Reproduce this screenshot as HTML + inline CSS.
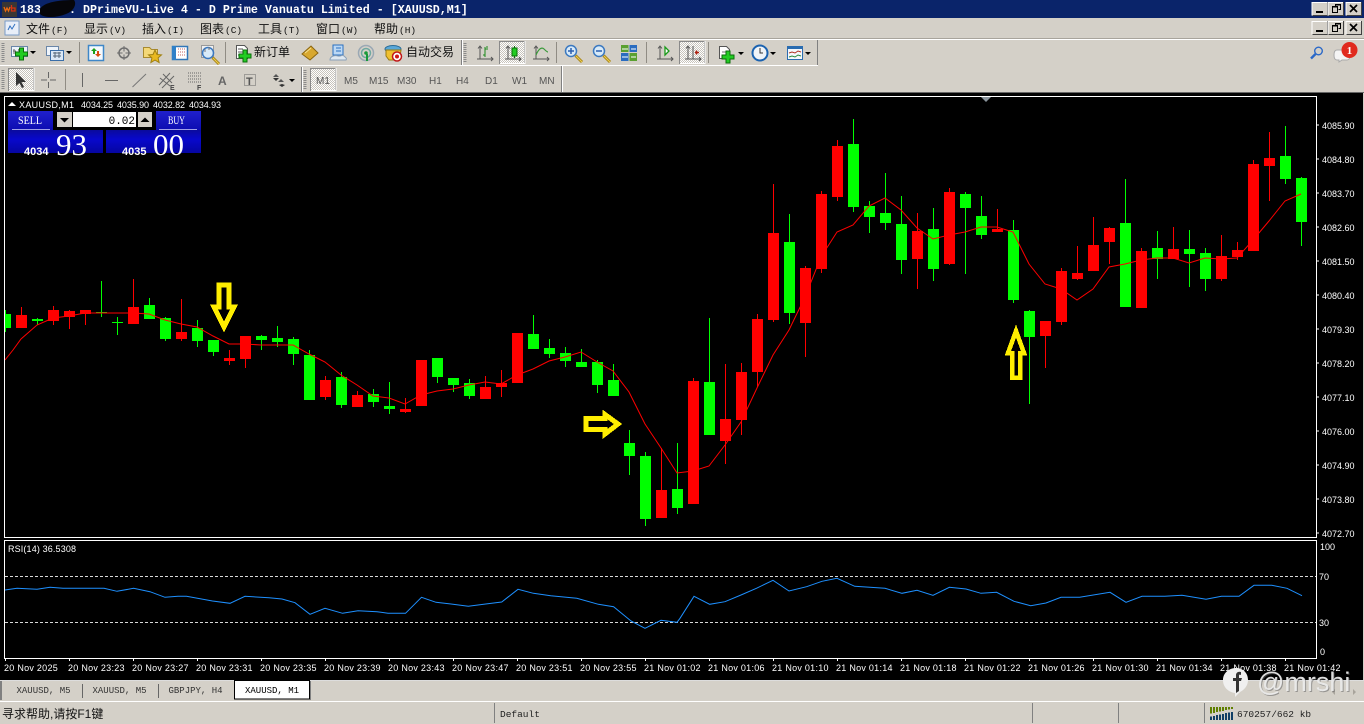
<!DOCTYPE html>
<html>
<head>
<meta charset="utf-8">
<title>DPrimeVU-Live 4</title>
<style>
html,body{margin:0;padding:0;background:#d4d0c8;width:1364px;height:724px;overflow:hidden}
svg{display:block;position:absolute;left:0;top:0}
text{white-space:pre}
.s{font-family:"Liberation Sans",sans-serif;font-size:9px;fill:#fff}
.t{font-family:"Liberation Sans",sans-serif;font-size:9px;fill:#fff;letter-spacing:.27px}
.m{font-family:"Liberation Mono",monospace;font-size:9px;fill:#333}
.c{font-family:"Liberation Sans","WenQuanYi Zen Hei","Noto Sans CJK SC",sans-serif;font-size:12px;fill:#111}
.p{font-family:"Liberation Mono",monospace;font-size:9.5px;fill:#222}
.f{font-family:"Liberation Sans",sans-serif;font-size:10px;fill:#555}
.ser{font-family:"Liberation Serif",serif;fill:#fff}
</style>
</head>
<body>
<svg width="1364" height="724" viewBox="0 0 1364 724" xmlns="http://www.w3.org/2000/svg">
<defs>
<pattern id="chk" width="2" height="2" patternUnits="userSpaceOnUse"><rect width="2" height="2" fill="#fff"/><rect width="1" height="1" fill="#c8c4bc"/><rect x="1" y="1" width="1" height="1" fill="#c8c4bc"/></pattern>
<linearGradient id="bt" x1="0" y1="0" x2="0" y2="1"><stop offset="0" stop-color="#2020cc"/><stop offset="1" stop-color="#0c0cb0"/></linearGradient>
<linearGradient id="bl" x1="0" y1="0" x2="0" y2="1"><stop offset="0" stop-color="#0a0a9c"/><stop offset=".4" stop-color="#0808cc"/><stop offset="1" stop-color="#0606a0"/></linearGradient>
<g id="bw"><rect width="16" height="14" fill="#d4d0c8"/><path d="M0 13.5V.5H15.5" fill="none" stroke="#fff"/><path d="M.5 13.5H15.5V0" fill="none" stroke="#404040"/></g>
<g id="winbtns">
<use href="#bw" x="1312" y="0"/><rect x="1316" y="9" width="7" height="2" fill="#000"/>
<use href="#bw" x="1328" y="0"/><path d="M1335.5 4.500V2.500H1340.500V7.500H1338.500M1332.500 4.500H1337.500V10.500H1332.500Z" fill="none" stroke="#000"/><path d="M1332 5H1338M1335 3H1341" stroke="#000"/>
<use href="#bw" x="1346" y="0"/><path d="M1350 3L1357 10M1357 3L1350 10" stroke="#000" stroke-width="1.700"/>
</g>
<path id="plus" d="M-2-6h4v4h4v4h-4v4h-4v-4h-4v-4h4z" fill="#22cc22" stroke="#0a6e0a"/>
<path id="drop" d="M0 0h6l-3 3z" fill="#000"/>
<g id="grip"><path d="M3 0V20" stroke="#8a8a8a" stroke-width="3" stroke-dasharray="1 1"/></g>
<g id="axes"><path d="M3 0V13M0 13H16M1 2.500L3 0L5 2.500M14 11L16 13L14 15M0 11" fill="none" stroke="#555"/></g>
<g id="mag"><circle cx="0" cy="0" r="5.500" fill="#d8eaf8" stroke="#3a78c0" stroke-width="1.500"/><path d="M4.500 4.500L11 11" stroke="#a88418" stroke-width="3"/><path d="M5 5L11 11" stroke="#f0d050"/></g>
</defs>

<!-- app chrome -->
<rect width="1364" height="724" fill="#d4d0c8"/>
<rect width="1364" height="18" fill="#0a246a"/>
<rect x="2" y="2" width="15" height="15" fill="#3a3634"/>
<path d="M4 7l1.500 4 1.500-3 1.500 3 1.500-4" fill="none" stroke="#f06a10" stroke-width="1.300"/><path d="M11.500 5v6h3.500v-3h-3.500" fill="none" stroke="#d83010" stroke-width="1.300"/>
<text x="20" y="13" font-family="Liberation Mono,monospace" font-size="11.670" font-weight="bold" fill="#fff">183</text>
<path d="M40 9C44 2 60 0 74 0C77 4 74 11 66 14C56 18 44 18 40 14Z" fill="#06060a"/>
<text x="69" y="13" font-family="Liberation Mono,monospace" font-size="11.670" font-weight="bold" fill="#fff">. DPrimeVU-Live 4 - D Prime Vanuatu Limited - [XAUUSD,M1]</text>
<use href="#winbtns" y="2"/>
<use href="#winbtns" y="21"/>

<!-- menu -->
<g>
<rect x="5" y="21" width="14" height="14" fill="#e8eef8" stroke="#7a9cc8"/><path d="M8 30l2-4 2 3 3-5" fill="none" stroke="#2f6fc0"/>
<text class="c" x="26" y="33">文件<tspan font-family="Liberation Mono,monospace" font-size="9.500" dx="1">(F)</tspan></text>
<text class="c" x="84" y="33">显示<tspan font-family="Liberation Mono,monospace" font-size="9.500" dx="1">(V)</tspan></text>
<text class="c" x="142" y="33">插入<tspan font-family="Liberation Mono,monospace" font-size="9.500" dx="1">(I)</tspan></text>
<text class="c" x="200" y="33">图表<tspan font-family="Liberation Mono,monospace" font-size="9.500" dx="1">(C)</tspan></text>
<text class="c" x="258" y="33">工具<tspan font-family="Liberation Mono,monospace" font-size="9.500" dx="1">(T)</tspan></text>
<text class="c" x="316" y="33">窗口<tspan font-family="Liberation Mono,monospace" font-size="9.500" dx="1">(W)</tspan></text>
<text class="c" x="374" y="33">帮助<tspan font-family="Liberation Mono,monospace" font-size="9.500" dx="1">(H)</tspan></text>
</g>

<!-- toolbar separators -->
<rect y="38" width="1364" height="1" fill="#a8a49c"/>
<rect y="39" width="1364" height="1" fill="#fff"/>
<rect y="65" width="818" height="1" fill="#fff"/>
<rect x="817" y="40" width="1" height="25" fill="#808080"/>
<rect y="92" width="1364" height="1" fill="#666"/>
<rect x="461" y="40" width="1" height="25" fill="#808080"/><rect x="462" y="40" width="1" height="25" fill="#fff"/>
<rect x="301" y="67" width="1" height="25" fill="#808080"/><rect x="302" y="67" width="1" height="25" fill="#fff"/>
<rect x="561" y="66" width="1" height="26" fill="#808080"/><rect x="562" y="66" width="1" height="26" fill="#fff"/>
<use href="#grip" x="0" y="43"/><use href="#grip" x="0" y="70"/><use href="#grip" x="462" y="43"/><use href="#grip" x="302" y="70"/>
<g fill="#908c84">
<rect x="79" y="42" width="1" height="21"/><rect x="225" y="42" width="1" height="21"/><rect x="556" y="42" width="1" height="21"/><rect x="646" y="42" width="1" height="21"/><rect x="708" y="42" width="1" height="21"/><rect x="65" y="69" width="1" height="21"/>
</g>

<!-- toolbar 1 icons -->
<rect x="11.500" y="46.500" width="16" height="10" fill="#eef4fb" stroke="#6a86a8"/><path d="M14 49v5M13 51h3M19 49v3M18 50h3" stroke="#666" fill="none"/><use href="#plus" x="21.500" y="54"/><use href="#drop" x="30" y="51"/>
<rect x="46.500" y="46.500" width="12" height="9" fill="#eef4fb" stroke="#6a86a8"/><rect x="50.500" y="50.500" width="13" height="10" fill="#dbe8f6" stroke="#3a6ea8"/><path d="M53 53h8M53 56h8M55 52v6M59 52v6" stroke="#567" fill="none"/><use href="#drop" x="66" y="51"/>
<rect x="88.500" y="45.500" width="15" height="15" fill="#f4f8fc" stroke="#3f87c8" stroke-width="1.500"/><path d="M94 48l-3 3h2v3h2v-3h2z" fill="#1aa01a"/><path d="M98 57l3-3h-2v-3h-2v3h-2z" fill="#d84a10"/>
<circle cx="124" cy="53" r="5" fill="none" stroke="#6e6e6e" stroke-width="1.500"/><path d="M124 46v14M117 53h14" stroke="#6e6e6e"/><circle cx="124" cy="53" r="1.500" fill="#d4d0c8"/>
<path d="M143.500 47.500h6l2 2h6v8h-14z" fill="#f4d878" stroke="#a88a30"/><path d="M155 50l2 4.500 4.500.4-3.400 3 1 4.600-4.100-2.400-4.100 2.400 1-4.600-3.400-3 4.500-.4z" fill="#e8b820" stroke="#a08010"/>
<rect x="172.500" y="46.500" width="15" height="13" fill="#fff" stroke="#3176b8" stroke-width="1.500"/><rect x="172" y="46" width="4" height="14" fill="#2f80c8"/><path d="M178 49h8M178 52h8M178 55h8" stroke="#c06060" stroke-dasharray="1 1"/>
<rect x="201.500" y="45.500" width="12" height="12" fill="#f0f0f0" stroke="#999"/><use href="#mag" x="208" y="53" /><path d="M205 49v3M209 47v3" stroke="#777"/>
<path d="M236.500 45.500h8l3 3v10h-11z" fill="#fff" stroke="#555"/><path d="M238 49h5M238 52h7M238 55h5" stroke="#555"/><use href="#plus" x="245" y="56"/>
<text class="c" x="254" y="56">新订单</text>
<path d="M302 54l9-8 7 7-8 7z" fill="#d8a830" stroke="#8a6510"/><path d="M305 53l6-5" stroke="#f6e090"/>
<path d="M333 45h10v10h-10z" fill="#bcd8f4" stroke="#2a70c0"/><path d="M336 48h5M336 51h5" stroke="#2a70c0"/><path d="M330 60c0-4 5-5 8-4s4-2 6 0 3 2 2 4z" fill="#dfe8f0" stroke="#8aa0b8"/>
<circle cx="366" cy="53" r="7.500" fill="none" stroke="#9aa8b4" stroke-width="1.500"/><circle cx="366" cy="53" r="4.500" fill="none" stroke="#6fa8a0" stroke-width="1.500"/><circle cx="366" cy="53" r="1.800" fill="#1a9a3a"/><path d="M367 54v7" stroke="#1a9a3a" stroke-width="2"/>
<ellipse cx="393" cy="49" rx="8" ry="3.500" fill="#5aa8d8" stroke="#2a6c98"/><path d="M386 50h15l-1 7-4 3h-7l-3-4z" fill="#f0c030" stroke="#9a7a10"/><circle cx="397" cy="56.500" r="4.500" fill="#fff" stroke="#c01818" stroke-width="1.500"/><circle cx="397" cy="56.500" r="2" fill="#d01818"/>
<text class="c" x="406" y="56">自动交易</text>

<!-- chart type -->
<g transform="translate(477,46)"><use href="#axes"/><path d="M8 1v10M8 3h3M11 3" stroke="#1a8a1a" fill="none"/><path d="M9 1H11M8 9H6" stroke="#1a8a1a"/></g>
<rect x="499.500" y="41.500" width="25" height="22" fill="url(#chk)" stroke="#8a8a8a"/><path d="M500 63.500H525V41" fill="none" stroke="#fff"/>
<g transform="translate(505,46)"><use href="#axes"/><rect x="7" y="2" width="5" height="8" fill="#22cc22" stroke="#0a6e0a"/><path d="M9.500 0v2M9.500 10v2" stroke="#0a6e0a"/></g>
<g transform="translate(533,46)"><use href="#axes"/><path d="M3 9C6 2 9 1 11 3S14 6 15 6" fill="none" stroke="#3a9a3a" stroke-width="1.200"/></g>
<use href="#mag" x="571" y="51"/><path d="M568 51h6M571 48v6" stroke="#2a60b0" stroke-width="1.500"/>
<use href="#mag" x="599" y="51"/><path d="M596 51h6" stroke="#2a60b0" stroke-width="1.500"/>
<g><rect x="621" y="45" width="7.500" height="7" fill="#5aa030"/><rect x="629.500" y="45" width="7.500" height="7" fill="#2a6cc0"/><rect x="621" y="53" width="7.500" height="8" fill="#2a6cc0"/><rect x="629.500" y="53" width="7.500" height="8" fill="#5aa030"/><path d="M622 49h6M631 49h5M622 57h6M631 57h5" stroke="#fff"/></g>
<g transform="translate(657,46)"><use href="#axes"/><path d="M8 1l4 4-4 4z" fill="#fff" stroke="#1a9a1a" stroke-width="1.300"/></g>
<rect x="679.500" y="41.500" width="25" height="22" fill="url(#chk)" stroke="#8a8a8a"/><path d="M680 63.500H705V41" fill="none" stroke="#fff"/>
<g transform="translate(685,46)"><use href="#axes"/><path d="M8 0V13" stroke="#555"/><path d="M14 6.500h-4M11.500 4.500v4" stroke="#b02010" stroke-width="1.500"/></g>
<path d="M719.500 46.500h7l3 3v9h-10z" fill="#fff" stroke="#555"/><path d="M722 52h4M722 55h4" stroke="#777"/><use href="#plus" x="728" y="57"/><use href="#drop" x="738" y="52"/>
<circle cx="760" cy="53" r="7.500" fill="#f0f4f8" stroke="#1a62b0" stroke-width="2"/><path d="M760 48v5h3" stroke="#333" fill="none"/><use href="#drop" x="770" y="52"/>
<rect x="787.500" y="46.500" width="15" height="13" fill="#f4f8fc" stroke="#2a6cb0"/><rect x="787" y="46" width="16" height="3" fill="#2a6cb0"/><path d="M789 53l3-1 3 1 3-2 3 1" fill="none" stroke="#b03020"/><path d="M789 57l3-1 3 1 3-2 3 1" fill="none" stroke="#2a8a3a"/><use href="#drop" x="805" y="52"/>
<!-- search + chat -->
<circle cx="1318.500" cy="51" r="3.800" fill="none" stroke="#2a68c8" stroke-width="1.400"/><path d="M1315.500 54L1311 58.500" stroke="#2a68c8" stroke-width="2.400"/>
<path d="M1337 50h10c2 0 3 2 3 5s-1 5-3 5h-5l-3 2v-2h-2c-2 0-3-2-3-5s1-5 3-5z" fill="#f4f4f4" stroke="#aaa"/>
<circle cx="1349.500" cy="50" r="8" fill="#e02a1e"/><text x="1349.500" y="54" text-anchor="middle" font-family="Liberation Serif,serif" font-size="11" font-weight="bold" fill="#fff">1</text>

<!-- toolbar 2 -->
<rect x="8.500" y="68.500" width="25" height="22" fill="url(#chk)" stroke="#8a8a8a"/><path d="M9 90.500H34V68" fill="none" stroke="#fff"/>
<path d="M16 72v14l3.500-3 2.500 5 2-1-2.500-5h4.500z" fill="#333"/>
<path d="M48.500 72v6M48.500 82v6M41 80h6M50 80h6" stroke="#666" fill="none"/>
<rect x="82" y="73" width="1" height="14" fill="#666"/><rect x="105" y="80" width="13" height="1" fill="#666"/><path d="M132.500 87L146 74" stroke="#777"/>
<path d="M159 85L170 73M162 88L174 76M160 78l10 8M163 74l9 9" stroke="#666" fill="none"/><text x="170" y="90" font-family="Liberation Sans,sans-serif" font-size="7" font-weight="bold" fill="#444">E</text>
<path d="M188 73h14M188 76h14M188 79h14M188 82h14" stroke="#666" stroke-dasharray="1 1"/><text x="197" y="90" font-family="Liberation Sans,sans-serif" font-size="7" font-weight="bold" fill="#444">F</text>
<text x="218" y="85" font-family="Liberation Sans,sans-serif" font-size="12" font-weight="bold" fill="#666">A</text>
<rect x="244.500" y="74.500" width="11" height="11" fill="none" stroke="#666" stroke-dasharray="1 1"/><text x="246" y="85" font-family="Liberation Sans,sans-serif" font-size="11" font-weight="bold" fill="#555">T</text>
<path d="M276 74l-3 3h6zM281 79l-3 3h6z" fill="#555"/><path d="M273 78l3 3 3-3zM282 84l-3 1 3 2 3-2z" fill="#333"/><use href="#drop" x="289" y="79"/>
<rect x="310.500" y="68.500" width="25" height="22" fill="url(#chk)" stroke="#8a8a8a"/><path d="M311 90.500H336V68" fill="none" stroke="#fff"/>
<text class="f" x="316" y="84">M1</text><text class="f" x="344" y="84">M5</text><text class="f" x="369" y="84">M15</text><text class="f" x="397" y="84">M30</text><text class="f" x="429" y="84">H1</text><text class="f" x="456" y="84">H4</text><text class="f" x="485" y="84">D1</text><text class="f" x="512" y="84">W1</text><text class="f" x="539" y="84">MN</text>

<!-- chart bg -->
<rect x="0" y="93" width="1363" height="587" fill="#000"/>
<path d="M4.500 96.500H1316.500V537.500H4.500ZM4.500 540.500H1316.500V658.500H4.500Z" fill="none" stroke="#fff"/>
<path d="M981 97h10l-5 5z" fill="#8a949c"/>
<rect y="680" width="1364" height="1" fill="#ddd"/>

<svg x="5" y="97" width="1311" height="440" viewBox="5 97 1311 440">
<g transform="translate(.5,0)" fill="none" shape-rendering="crispEdges">
<path stroke="#00ff00" d="M5 310V332M37 318V325M101 281V317M117 317V335M149 298V319M165 317V341M197 320V347M213 340V356M261 335V350M277 326V347M293 337V365M309 350V400M341 372V408M373 389V407M389 382V414M437 358V383M453 378V392M469 379V399M533 315V349M549 339V358M565 347V367M581 349V367M597 360V393M613 364V396M629 430V475M645 452V526M677 443V514M709 318V435M789 214V324M853 119V212M869 201V233M885 173V230M901 196V274M933 208V281M965 192V274M981 196V239M1013 220V303M1029 310V404M1125 179V307M1157 231V279M1189 230V287M1205 248V291M1285 126V184M1301 177V246"/>
<path stroke="#ff0000" d="M21 307V328M53 306V325M69 310V329M85 310V325M133 279V324M181 299V341M229 350V365M245 336V368M325 376V400M357 391V407M405 398V413M485 376V399M501 370V397M661 448V518M693 378V504M725 364V464M741 363V435M757 314V387M773 184V322M805 266V357M821 191V273M837 140V201M917 213V289M949 188V265M997 209V232M1045 321V368M1061 268V325M1077 246V280M1093 217V271M1109 227V264M1141 248V308M1173 227V259M1221 235V281M1237 242V260M1253 160V251M1269 132V201"/>
<path stroke="#00ff00" stroke-width="11" d="M5 314V328M37 319V321M101 312V313M117 322V323M149 305V319M165 318V339M197 328V341M213 340V352M261 336V340M277 338V342M293 339V354M309 355V400M341 377V405M373 394V402M389 406V409M437 358V377M453 378V385M469 383V396M533 334V349M549 348V354M565 353V361M581 362V367M597 362V385M613 380V396M629 443V456M645 456V519M677 489V508M709 382V435M789 242V313M853 144V207M869 206V217M885 213V223M901 224V260M933 229V269M965 194V208M981 216V235M1013 230V300M1029 311V337M1125 223V307M1157 248V259M1189 249V254M1205 253V279M1285 156V179M1301 178V222"/>
<path stroke="#ff0000" stroke-width="11" d="M21 315V328M53 310V321M69 311V317M85 310V314M133 307V324M181 332V339M229 358V361M245 336V359M325 380V397M357 395V407M405 409V412M421 360V406M485 387V399M501 383V387M517 333V383M661 490V518M693 381V504M725 419V441M741 372V420M757 319V372M773 233V320M805 268V323M821 194V269M837 146V197M917 231V259M949 192V264M997 229V232M1045 321V336M1061 271V322M1077 273V279M1093 245V271M1109 228V242M1141 251V308M1173 249V259M1221 256V279M1237 250V257M1253 164V251M1269 158V166"/>
</g>
<polyline fill="none" stroke="#ff0000" points="5,360 13,350 21,339 37,325 53,318 69,316 85,313 101,313 117,313 133,313 149,314 165,320 181,324 197,327 213,336 229,344 245,344 261,345 277,345 293,345 309,354 325,362 330,366 341,375 357,385 373,396 389,398 405,404 421,395 437,391 453,389 469,385 485,382 501,384 517,375 533,369 549,361 565,357 581,352 597,362 613,371 629,392 645,424 661,448 677,473 693,471 709,466 725,445 741,422 757,388 773,355 789,330 805,297 821,257 837,232 853,225 869,206 885,198 901,210 917,228 933,239 949,235 965,232 981,227 997,227 1013,232 1029,264 1045,284 1061,289 1077,300 1093,289 1109,267 1125,264 1141,260 1157,258 1173,258 1189,263 1205,258 1221,259 1237,258 1253,240 1269,221 1285,201 1301,194"/>
<g fill="none" stroke="#ffee00" stroke-width="5" shape-rendering="crispEdges">
<polygon points="219.200,285 229.200,285 229.200,307 234,307 224,327 214,307 219.200,307"/>
<polygon points="585.800,418.500 605,418.500 605,414.500 618,424 605,434 605,429.300 585.800,429.300"/>
<polygon stroke-width="4.500" points="1012,377.500 1020,377.500 1020,353 1024,353 1016,331 1008,353 1012,353"/>
</g>
</svg>

<!-- chart header -->
<path d="M8 106l4-4 4 4z" fill="#fff"/>
<text class="s" x="19" y="108" textLength="55">XAUUSD,M1</text>
<text class="s" x="81" y="108" textLength="32">4034.25</text><text class="s" x="117" y="108" textLength="32">4035.90</text><text class="s" x="153" y="108" textLength="32">4032.82</text><text class="s" x="189" y="108" textLength="32">4034.93</text>

<!-- one-click panel -->
<rect x="8" y="111" width="45" height="20" fill="url(#bt)"/>
<rect x="156" y="111" width="45" height="20" fill="url(#bt)"/>
<rect x="8" y="130" width="95" height="23" fill="url(#bl)"/>
<rect x="106" y="130" width="95" height="23" fill="url(#bl)"/>
<rect x="12" y="129" width="38" height="1" fill="#a0a0e8"/>
<rect x="159" y="129" width="38" height="1" fill="#a0a0e8"/>
<rect x="57" y="112" width="15" height="15" fill="#d4d0c8"/><path d="M60 118h9l-4.500 4.500z" fill="#000"/>
<rect x="73" y="112" width="63" height="15" fill="#fff"/>
<text x="135" y="124" text-anchor="end" font-family="Liberation Mono,monospace" font-size="11" fill="#000">0.02</text>
<rect x="138" y="112" width="14" height="15" fill="#d4d0c8"/><path d="M140.500 122h9l-4.500-4.500z" fill="#000"/>
<text class="ser" x="18" y="124" font-size="12" textLength="24" lengthAdjust="spacingAndGlyphs">SELL</text>
<text class="ser" x="168" y="124" font-size="12" textLength="17" lengthAdjust="spacingAndGlyphs">BUY</text>
<text x="24" y="155" font-family="Liberation Sans,sans-serif" font-size="11" font-weight="bold" fill="#fff">4034</text>
<text class="ser" x="56" y="155" font-size="31">93</text>
<text x="122" y="155" font-family="Liberation Sans,sans-serif" font-size="11" font-weight="bold" fill="#fff">4035</text>
<text class="ser" x="153" y="155" font-size="31">00</text>

<!-- price scale -->
<path d="M1317 125h2M1317 159h2M1317 193h2M1317 227h2M1317 261h2M1317 295h2M1317 329h2M1317 363h2M1317 397h2M1317 431h2M1317 465h2M1317 499h2M1317 533h2" stroke="#fff"/>
<g>
<text class="s" x="1322" y="129">4085.90</text><text class="s" x="1322" y="163">4084.80</text><text class="s" x="1322" y="197">4083.70</text><text class="s" x="1322" y="231">4082.60</text><text class="s" x="1322" y="265">4081.50</text><text class="s" x="1322" y="299">4080.40</text><text class="s" x="1322" y="333">4079.30</text><text class="s" x="1322" y="367">4078.20</text><text class="s" x="1322" y="401">4077.10</text><text class="s" x="1322" y="435">4076.00</text><text class="s" x="1322" y="469">4074.90</text><text class="s" x="1322" y="503">4073.80</text><text class="s" x="1322" y="537">4072.70</text>
<text class="s" x="1320" y="550">100</text><text class="s" x="1319" y="580">70</text><text class="s" x="1319" y="626">30</text><text class="s" x="1320" y="655">0</text>
</g>

<!-- RSI -->
<text class="s" x="8" y="552" textLength="68">RSI(14) 36.5308</text>
<path d="M5 576.500H1316M5 622.500H1316" stroke="#d8d8d8" stroke-dasharray="3 2"/>
<polyline fill="none" stroke="#1e90ff" points="5,590 17,588.300 37,589.300 50,587.300 63,588.300 104,588.300 117,591.300 133.600,588.300 150,591.700 165,597.300 178,596.300 186.500,596.300 212.500,601 230,603.300 245,596.300 269,597.700 282,599 295,602.700 310,614.300 325,608.300 342.600,613.300 358,610.700 377,611.700 388,613.300 405.500,613.300 421.500,597.300 436,602.300 451,604 468.300,606.300 485.700,604 501.700,602 518,589.300 533.400,593.300 550.700,595.700 576.800,598.300 598.400,604.300 613.600,606.700 631,621 645,628.300 661,620.300 677,622.300 680,618.300 694,596.300 709.700,604.300 725,601.700 741,595 756.400,588.300 773,580.300 789,591 806.600,586.700 822,581.300 837,578.300 854.700,586.300 885,588.300 902,593.300 917,590.300 933,595.300 949.400,587.300 966,589 981,593.300 996.600,592.300 1014,601.300 1030.700,605.700 1046,603 1061,597.300 1079.600,597.300 1110,592.300 1126,602.300 1142,596.300 1164.700,596.300 1182,595.300 1206,599.300 1221.500,596.300 1239,596.300 1254,585.300 1271.700,585.300 1287,588.300 1302,595.700"/>

<!-- time scale -->
<path d="M5.500 658v3M69.500 658v3M133.500 658v3M197.500 658v3M261.500 658v3M325.500 658v3M389.500 658v3M453.500 658v3M517.500 658v3M581.500 658v3M645.500 658v3M709.500 658v3M773.500 658v3M837.500 658v3M901.500 658v3M965.500 658v3M1029.500 658v3M1093.500 658v3M1157.500 658v3M1221.500 658v3M1285.500 658v3" stroke="#fff"/>
<text class="t" x="4" y="671">20 Nov 2025</text><text class="t" x="68" y="671">20 Nov 23:23</text><text class="t" x="132" y="671">20 Nov 23:27</text><text class="t" x="196" y="671">20 Nov 23:31</text><text class="t" x="260" y="671">20 Nov 23:35</text><text class="t" x="324" y="671">20 Nov 23:39</text><text class="t" x="388" y="671">20 Nov 23:43</text><text class="t" x="452" y="671">20 Nov 23:47</text><text class="t" x="516" y="671">20 Nov 23:51</text><text class="t" x="580" y="671">20 Nov 23:55</text><text class="t" x="644" y="671">21 Nov 01:02</text><text class="t" x="708" y="671">21 Nov 01:06</text><text class="t" x="772" y="671">21 Nov 01:10</text><text class="t" x="836" y="671">21 Nov 01:14</text><text class="t" x="900" y="671">21 Nov 01:18</text><text class="t" x="964" y="671">21 Nov 01:22</text><text class="t" x="1028" y="671">21 Nov 01:26</text><text class="t" x="1092" y="671">21 Nov 01:30</text><text class="t" x="1156" y="671">21 Nov 01:34</text><text class="t" x="1220" y="671">21 Nov 01:38</text><text class="t" x="1284" y="671">21 Nov 01:42</text>

<!-- tabs -->
<rect y="681" width="2" height="19" fill="#808080"/>
<rect x="82" y="684" width="1" height="14" fill="#666"/><rect x="158" y="684" width="1" height="14" fill="#666"/>
<text class="m" x="16.500" y="693">XAUUSD, M5</text><text class="m" x="92.500" y="693">XAUUSD, M5</text><text class="m" x="168.500" y="693">GBPJPY, H4</text>
<rect x="234.500" y="680.500" width="75" height="18.500" fill="#fff" stroke="#000"/>
<rect x="310" y="681" width="1" height="19" fill="#808080"/>
<text class="m" x="245" y="693" style="fill:#000">XAUUSD, M1</text>
<rect y="701" width="1364" height="1" fill="#fff"/>
<path d="M1332 692l3-3v6zM1353 689l3 3-3 3z" fill="#a8a49c"/>

<!-- status -->
<text class="c" x="2" y="718">寻求帮助,请按F1键</text>
<rect x="494" y="703" width="1" height="20" fill="#808080"/><rect x="1032" y="703" width="1" height="20" fill="#808080"/><rect x="1118" y="703" width="1" height="20" fill="#808080"/><rect x="1204" y="703" width="1" height="20" fill="#808080"/>
<text class="p" x="500" y="717">Default</text>
<text class="p" x="1237" y="717">670257/662 kb</text>
<path stroke-width="2" fill="none" stroke="#5f7f00" d="M1211 707V713.500M1214 707V713M1217 707V712M1220 707V711.500M1223 707V711M1226 707V710M1229 707V709.500M1232 707V709"/>
<path stroke-width="2" fill="none" stroke="#123f66" d="M1211 716.500V720M1214 716V720M1217 715V720M1220 714.500V720M1223 714V720M1226 713V720M1229 712.500V720M1232 712V720"/>

<!-- watermark -->
<g>
<text x="1258" y="692" font-family="Liberation Sans,sans-serif" font-size="27" fill="#666" opacity=".55">@mrshi</text>
<text x="1257" y="691" font-family="Liberation Sans,sans-serif" font-size="27" fill="#eee" opacity=".92">@mrshi</text>
<path d="M1236 668c7 0 12 5 12 12 0 6-4 10-8 12l-5 5v-4c-7-1-12-6-12-13 0-7 6-12 13-12z" fill="#f0f0f0"/>
<path d="M1236 693v-12h-3v-3h3v-3c0-2 2-4 5-3v3c-2-1-2 0-2 1v2h3l-1 3h-2v10z" fill="#333"/>
</g>
</svg>
</body>
</html>
